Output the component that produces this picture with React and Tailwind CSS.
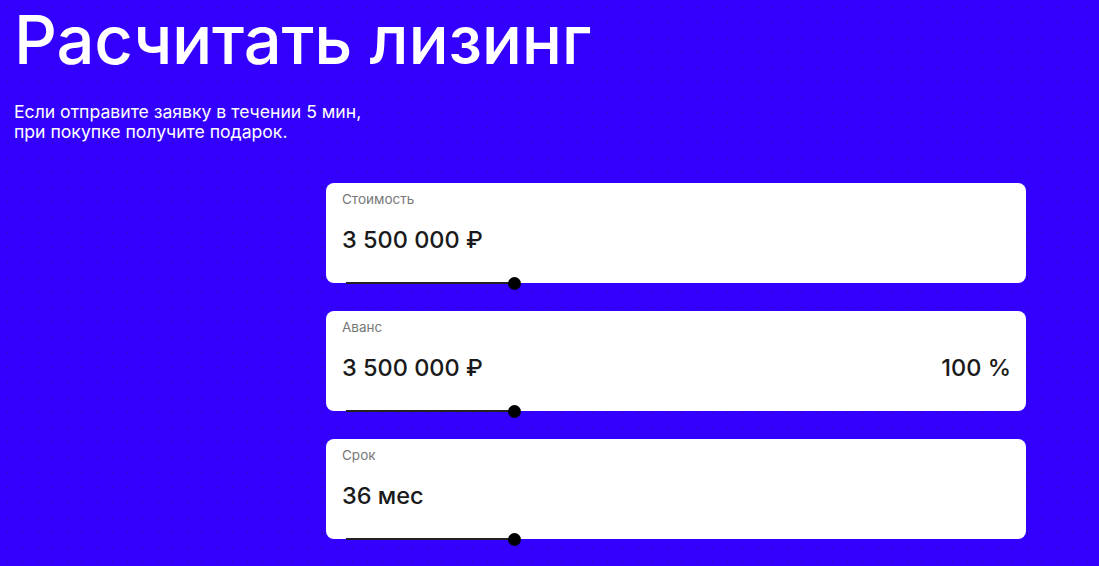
export default function App() {
  const cards = [
    { label: "Стоимость", value: "3 500 000 ₽" },
    { label: "Аванс", value: "3 500 000 ₽", right: "100 %" },
    { label: "Срок", value: "36 мес" },
  ];
  return (
    <div
      className="min-h-screen w-full bg-[#3300ff] overflow-hidden"
      style={{
        backgroundImage: "radial-gradient(circle, rgba(55,0,210,0.8) 1px, transparent 1.5px)",
        backgroundSize: "15px 15px",
        fontFamily: "Inter, 'Noto Sans', sans-serif",
      }}
    >
      <div className="px-[14px] pt-0">
        <h1 className="text-white text-[67px] leading-[80px] tracking-[-0.3px] font-medium">
          Расчитать лизинг
        </h1>
        <p className="mt-[22px] text-white text-[17.6px] leading-[20px]">
          Если отправите заявку в течении 5 мин,
          <br />
          при покупке получите подарок.
        </p>
      </div>
      <div className="mt-[41px] ml-[326px] w-[700px] flex flex-col gap-[28px]">
        {cards.map((c) => (
          <div key={c.label} className="relative h-[100px] bg-white rounded-[8px] pl-[16px] pr-[15px] pt-[8px]">
            <div className="text-[13.5px] leading-[16px] text-[#777777]">{c.label}</div>
            <div className="mt-[19px] flex justify-between items-center text-[23.5px] leading-[28px] text-[#1a1a1a] font-medium">
              <span>{c.value}</span>
              {c.right && <span>{c.right}</span>}
            </div>
            <div className="absolute left-[20px] bottom-[-1px] w-[168px] h-[2px] bg-[#222222]" />
            <div className="absolute left-[182px] bottom-[-7px] w-[13px] h-[13px] rounded-full bg-black" />
          </div>
        ))}
      </div>
    </div>
  );
}
